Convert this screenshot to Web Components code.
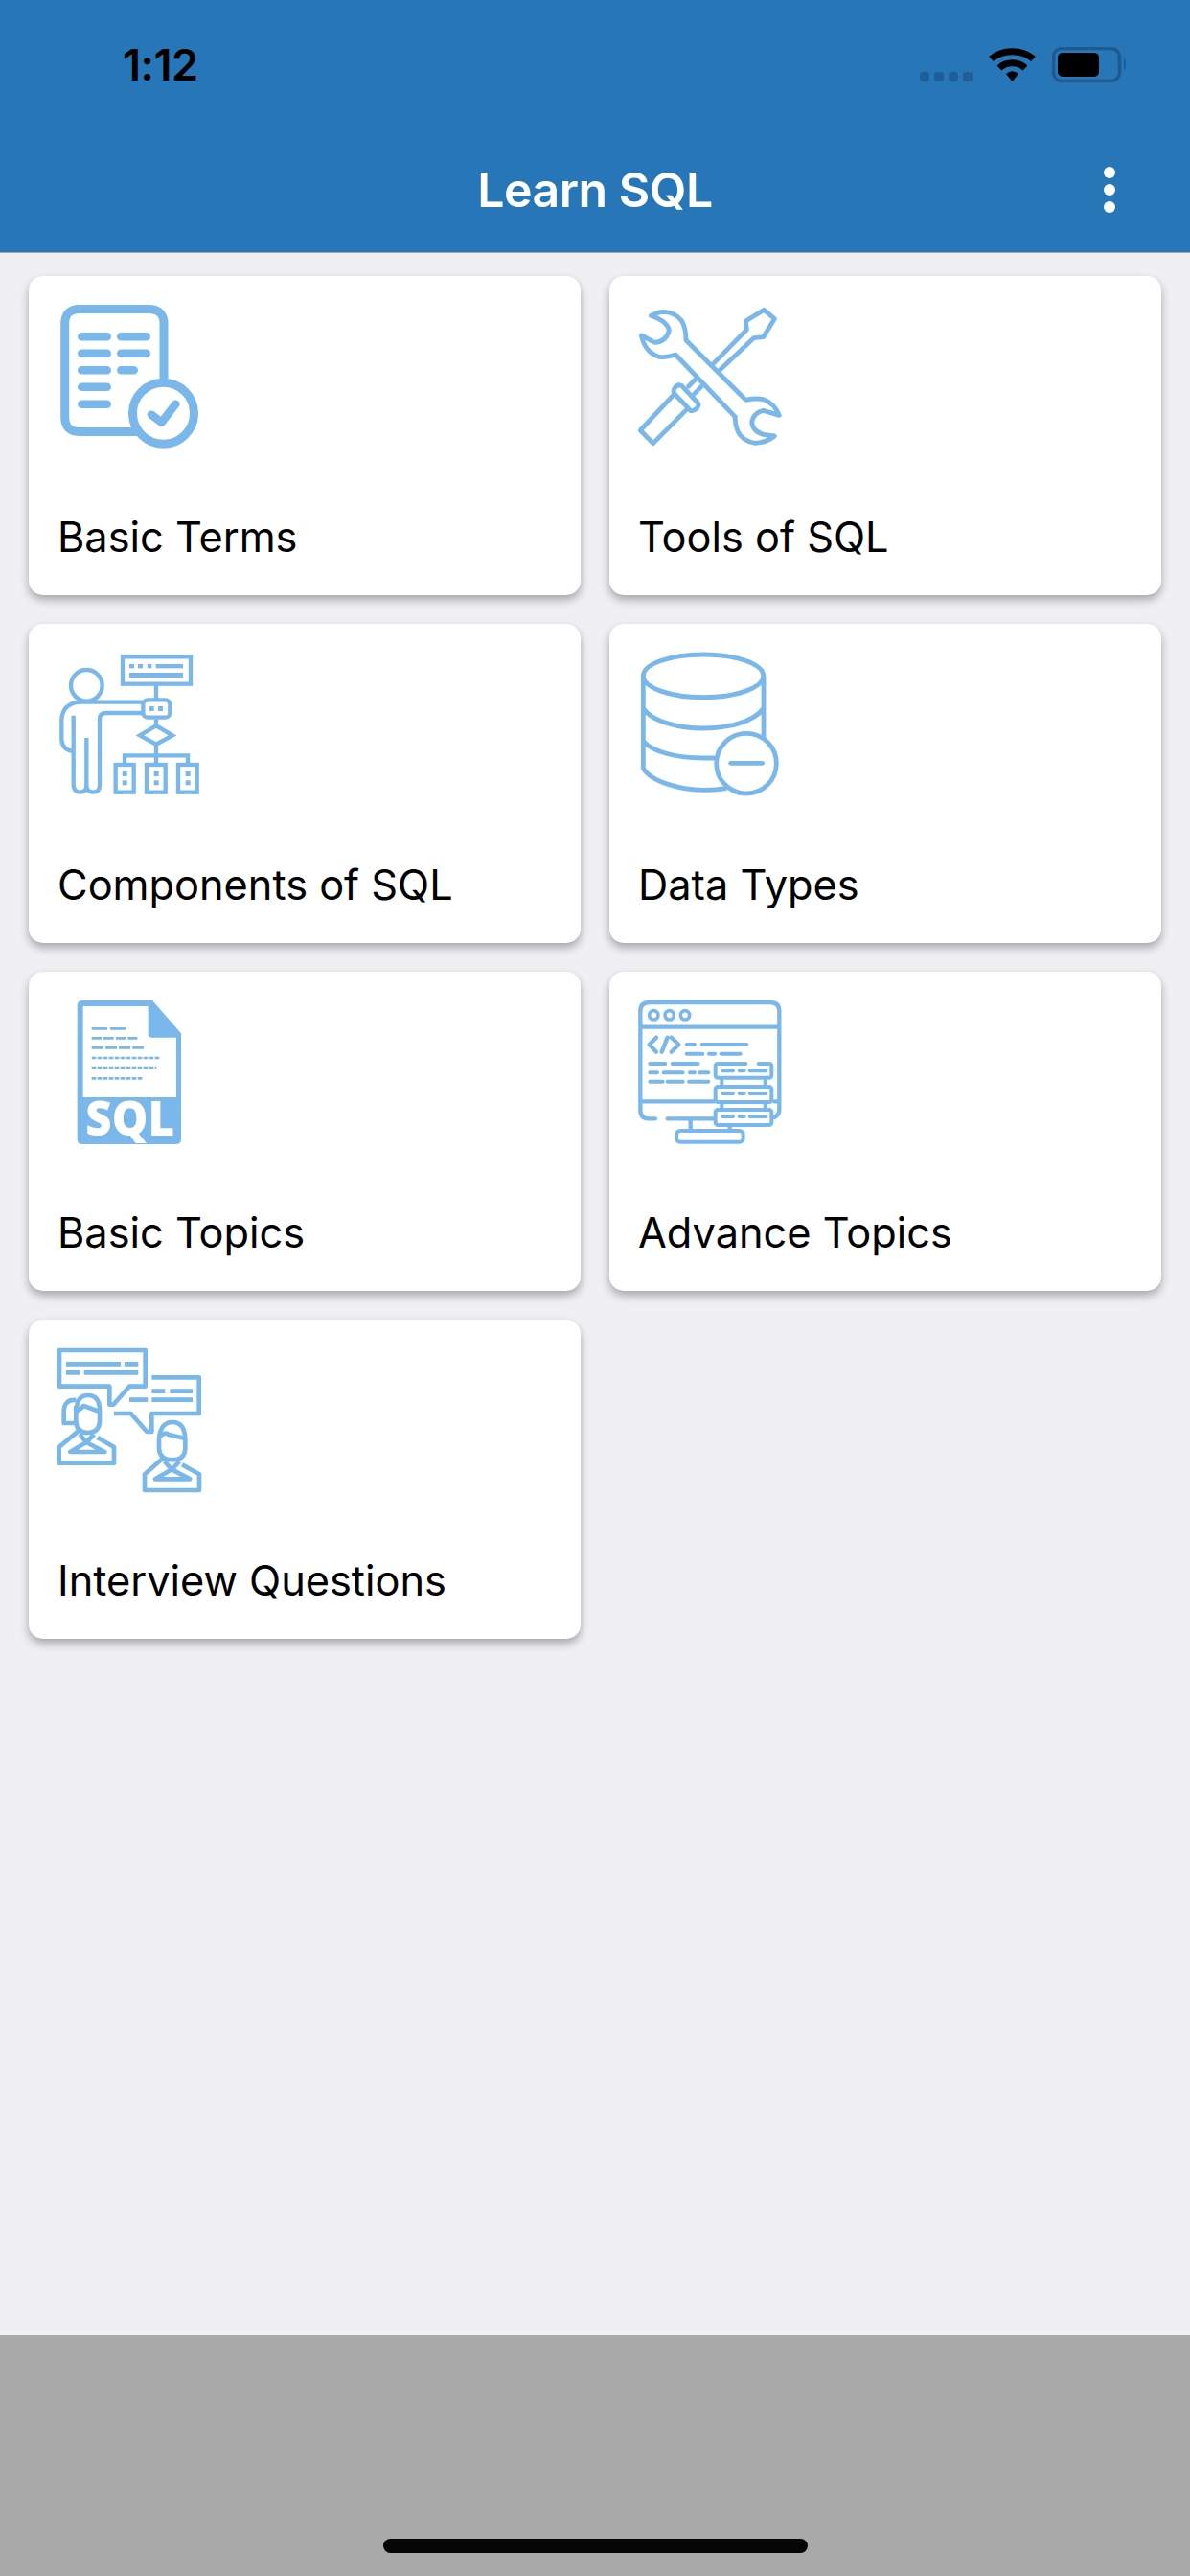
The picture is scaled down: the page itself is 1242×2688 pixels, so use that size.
<!DOCTYPE html>
<html lang="en"><head><meta charset="utf-8"><title>Learn SQL</title>
<style>
html,body{margin:0;padding:0;background:#efeff4}
body{width:1242px;height:2688px;overflow:hidden;font-family:Inter,"Liberation Sans",sans-serif}
</style></head><body>
<sql-app></sql-app>
<script>
const ICONS={
terms:`<svg viewBox="0 0 150 150" width="150" height="150" fill="none" stroke="#7ab8ec" stroke-linecap="round"><path stroke-width="9" d="M111 77V20Q111 4.500 95 4.500H23Q7.700 4.500 7.700 20V117Q7.700 132.400 23 132.400H83" stroke-linecap="butt"/><g stroke-width="8.600"><path d="M25.300 33.300H51.700M66.300 33.300H92.700M25.300 50.700H51.700M66.300 50.700H92.700M25.300 68.300H51.700M66.300 68.300H79.700M25.300 85.700H51.700M25.300 103.700H51.700"/></g><circle cx="110.500" cy="113.300" r="32" stroke-width="9" fill="#fff"/><path stroke-width="8.600" stroke-linejoin="round" d="M98 114.700L108.700 122.700L123.300 103.700"/></svg>`,
tools:`<svg viewBox="78 54 450 450" width="150" height="150" fill="none" stroke="#7ab8ec" stroke-width="14.500" stroke-linejoin="round" stroke-linecap="round"><path d="M316 236L418 132L415 105L472 70L505 98L470 155L440 158L330 262M262 283L236 309M252 335L276 310"/><path d="M205 305Q195 308 190 320Q187 328 195 336L242 385Q252 388 262 378Q270 368 264 360L215 308Z"/><path d="M190 335L85 447L125 488L232 380"/><path d="M118 88Q140 76 160 76Q195 78 215 105Q228 128 228 165L415 352Q445 345 470 350Q505 362 520 400L470 385Q440 392 434 420Q436 450 470 460L505 465Q480 485 445 487Q405 482 390 450Q380 425 382 405L195 210Q170 220 145 217Q100 205 88 150L130 172Q165 170 175 135Q170 105 118 88Z"/></svg>`,
comp:`<svg viewBox="60 63 450 450" width="150" height="150" fill="none" stroke="#7ab8ec" stroke-width="13"><rect x="264" y="76" width="213" height="85"/><path d="M369 161V210M369 272V298M369 350V412M270 412V385H468V412"/><rect x="328" y="211" width="84" height="55" rx="15"/><path d="M318 322L369 292L420 322L369 350Z"/><rect x="242" y="414" width="57" height="86"/><rect x="339" y="414" width="59" height="86"/><rect x="438" y="414" width="59" height="86"/><circle cx="151" cy="166" r="49"/><path d="M326 218H130Q75 222 73 275V335Q75 368 108 372M110 260V478Q112 500 131 500Q151 500 151 478V330M151 478Q151 500 172 500Q192 500 192 478V272Q192 252 212 252H326"/><g fill="#7ab8ec" stroke="none"><rect x="285" y="99" width="15" height="13"/><rect x="312" y="99" width="15" height="13"/><rect x="342" y="99" width="13" height="13"/><rect x="368" y="99" width="85" height="13"/><rect x="285" y="126" width="168" height="15"/><rect x="347" y="231" width="15" height="15"/><rect x="375" y="231" width="15" height="15"/><rect x="263" y="435" width="15" height="15"/><rect x="263" y="463" width="15" height="15"/><rect x="362" y="435" width="15" height="15"/><rect x="362" y="463" width="15" height="15"/><rect x="461" y="435" width="15" height="15"/><rect x="461" y="463" width="15" height="15"/></g></svg>`,
data:`<svg viewBox="48 48 450 450" width="150" height="150" fill="none" stroke="#7ab8ec" stroke-width="14.500"><ellipse cx="252" cy="121" rx="188" ry="67"/><path d="M64 121V410C90 455 190 478 252 478C280 478 305 476 325 472M441 121V315M64 222C90 265 180 285 252 285C330 285 410 265 441 222M64 325C95 360 170 378 252 378H290"/><circle cx="387" cy="395" r="94"/><path d="M338 394H437" stroke-linecap="round"/></svg>`,
sql:`<svg viewBox="0 42 450 450" width="150" height="150"><path fill="#7ab8ec" d="M78 42H297L387 145V476Q387 492 371 492H78Q62 492 62 476V58Q62 42 78 42Z"/><path fill="#fff" d="M80 60H284V148Q284 158 294 158H372V345H80Z"/><g stroke="#7ab8ec" stroke-width="8" fill="none"><path d="M107 130H156M165 130H213M107 160H138M144 160H176M183 160H214M220 160H250M107 190H143M150 190H186M192 190H228M235 190H270"/><path stroke-dasharray="14 4" d="M107 222H322M107 252H310M107 286H268"/></g><text x="88" y="466" fill="#fff" font-family="'Open Sans','Liberation Sans',sans-serif" font-weight="800" font-size="146" textLength="278" lengthAdjust="spacingAndGlyphs">SQL</text></svg>`,
adv:`<svg viewBox="48 42 450 450" width="150" height="150" fill="none" stroke="#7ab8ec" stroke-width="13" stroke-linecap="round" stroke-linejoin="round"><path d="M102 412H80Q55 412 55 385V75Q55 48 85 48H460Q490 48 490 75V385Q490 400 475 408M55 125H490M55 358H285M475 358H490M140 412H285M212 420V445M335 436V445"/><circle cx="97" cy="88" r="14" stroke-width="11"/><circle cx="146" cy="88" r="14" stroke-width="11"/><circle cx="195" cy="88" r="14" stroke-width="11"/><path d="M105 158L83 180L105 203M140 158L122 203M152 158L175 180L152 203"/><path stroke-width="12" d="M200 180H225M248 180H388M200 209H250M270 209H288M308 209H368M85 240H133M155 240H236M85 268H108M128 268H188M210 268H225M240 268H268M85 296H125M140 296H188M207 296H268"/><path stroke-width="12" d="M385 240H298Q290 240 290 248V276Q290 284 298 284H458Q466 284 466 276V248Q466 240 458 240H425"/><rect x="290" y="312" width="176" height="48" rx="8" stroke-width="12"/><rect x="290" y="384" width="176" height="48" rx="8" stroke-width="12"/><path stroke-width="12" stroke-linecap="butt" d="M310 284V312M446 284V312M310 360V384M446 360V384"/><path stroke-width="12" d="M312 262H345M365 262H380M398 262H448M312 333H345M365 333H380M398 333H448M312 405H345M365 405H380M398 405H448"/><rect x="168" y="450" width="209" height="35" rx="12" stroke-width="12"/></svg>`,
talk:`<svg viewBox="30 36 450 450" width="150" height="150" fill="none" stroke="#7ab8ec" stroke-width="14" stroke-linejoin="round"><path d="M36 42H305V155H255L205 212H193V155H36Z"/><path d="M325 127H473V240H325V297H310L260 240H207"/><path stroke-width="14" d="M57 85H228M240 85H283M57 112H100M113 112H283M325 170H367M382 170H453M255 197H313M325 197H453"/><path d="M90 225Q92 183 125 183Q160 183 162 225V265Q160 300 125 300Q90 300 88 265V215M92 232Q100 228 112 216L162 234M88 198Q50 195 50 235V270H85"/><path d="M95 295L35 345V395H207V345L155 315M100 305L120 330L145 305M120 330L70 360H178Z"/><path d="M348 320Q352 267 390 267Q428 267 430 320V350Q428 385 390 385Q350 385 348 350ZM350 312Q368 295 378 306L430 318"/><path d="M360 380L303 430V480H474V430L420 400M365 390L388 415L412 390M388 415L336 445H445Z"/></svg>`
};
class StatusBar extends HTMLElement{constructor(){super();this.attachShadow({mode:'open'}).innerHTML=`<style>
:host{display:flex;box-sizing:border-box;height:132px;padding:49px 65px 0 128px;justify-content:space-between;align-items:flex-start}
.t{font:600 45px/37px Inter,"Liberation Sans",sans-serif;color:#000;letter-spacing:-.5px}
.r{display:flex;align-items:flex-start}
.d{display:flex;gap:5px;margin:26px 17px 0 0}
.d i{width:10px;height:10px;border-radius:3px;background:#1f5f96}
.w{margin-right:17px}
</style><span class="t">1:12</span><div class="r"><div class="d"><i></i><i></i><i></i><i></i></div>
<svg class="w" width="49" height="36" viewBox="0 0 49 36"><path fill="none" stroke="#000" stroke-width="7" d="M2.500 12.500C14 2 35 2 46.500 12.500"/><path fill="none" stroke="#000" stroke-width="7" d="M11 22C18 15 31 15 38 22"/><path d="M18 28Q24.500 22.500 31 28L24.500 36Z"/></svg>
<svg width="79" height="37" viewBox="0 0 79 37"><rect x="1.500" y="1.500" width="69" height="34" rx="9" fill="none" stroke="#1f5a8f" stroke-width="3.500"/><rect x="6" y="6" width="43" height="25" rx="5"/><path d="M75 11Q79 18 75 25Z" fill="#1f5a8f"/></svg></div>`}}
class AppHeader extends HTMLElement{constructor(){super();this.attachShadow({mode:'open'}).innerHTML=`<style>
:host{display:block;background:#2776b7;border-bottom:1px solid #a7a7aa;height:264px;box-sizing:border-box}
.bar{display:grid;grid-template-columns:1fr auto 1fr;align-items:center;height:131px}
h1{margin:0;font:600 50px/1 Inter,"Liberation Sans",sans-serif;color:#fff;letter-spacing:-.5px}
.k{justify-self:end;margin-right:78px;display:flex;flex-direction:column;gap:6px;filter:blur(.6px)}
.k i{width:12px;height:12px;border-radius:50%;background:#fff;display:block}
</style><status-bar></status-bar><div class="bar"><span></span><h1><slot></slot></h1><div class="k"><i></i><i></i><i></i></div></div>`}}
class TopicIcon extends HTMLElement{connectedCallback(){if(!this.shadowRoot){this.attachShadow({mode:'open'}).innerHTML=`<style>:host{display:block;width:150px;height:150px}svg{display:block;overflow:visible}</style>`+ICONS[this.getAttribute('name')]}}}
class TopicCard extends HTMLElement{connectedCallback(){if(!this.shadowRoot){this.attachShadow({mode:'open'}).innerHTML=`<style>
:host{display:flex;flex-direction:column;box-sizing:border-box;height:333px;padding:30px 30px 0;background:#fff;border-radius:15px;box-shadow:0 5px 10px rgba(0,0,0,.3)}
.l{margin-top:67px;font:400 43.300px/50px Inter,"Liberation Sans",sans-serif;color:#000;white-space:nowrap}
</style><topic-icon name="${this.getAttribute('icon')}"></topic-icon><div class="l"><slot></slot></div>`}}}
class TopicGrid extends HTMLElement{constructor(){super();this.attachShadow({mode:'open'}).innerHTML=`<style>
:host{display:grid;grid-template-columns:576px 576px;gap:30px;padding:24px 30px;flex:1;align-content:start}
</style><slot></slot>`}}
class HomeArea extends HTMLElement{constructor(){super();this.attachShadow({mode:'open'}).innerHTML=`<style>
:host{display:flex;box-sizing:border-box;height:252px;background:#a9a9a9;justify-content:center;align-items:flex-end;padding-bottom:24px}
i{display:block;width:443px;height:15px;border-radius:8px;background:#050505}
</style><i></i>`}}
class SqlApp extends HTMLElement{constructor(){super();this.attachShadow({mode:'open'}).innerHTML=`<style>
:host{display:flex;flex-direction:column;height:2688px;background:#efeff4}
</style><app-header>Learn SQL</app-header><topic-grid>
<topic-card icon="terms">Basic Terms</topic-card><topic-card icon="tools">Tools of SQL</topic-card>
<topic-card icon="comp">Components of SQL</topic-card><topic-card icon="data">Data Types</topic-card>
<topic-card icon="sql">Basic Topics</topic-card><topic-card icon="adv">Advance Topics</topic-card>
<topic-card icon="talk">Interview Questions</topic-card></topic-grid><home-area></home-area>`}}
customElements.define('status-bar',StatusBar);
customElements.define('app-header',AppHeader);
customElements.define('topic-icon',TopicIcon);
customElements.define('topic-card',TopicCard);
customElements.define('topic-grid',TopicGrid);
customElements.define('home-area',HomeArea);
customElements.define('sql-app',SqlApp);
</script></body></html>
